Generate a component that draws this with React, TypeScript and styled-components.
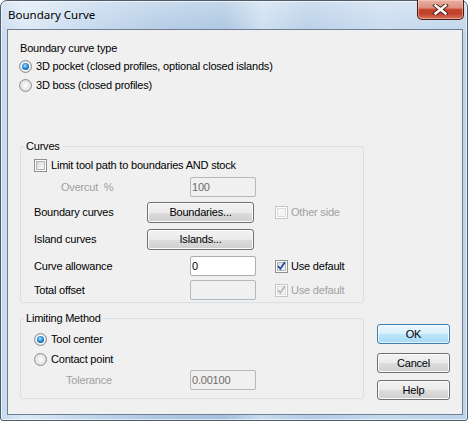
import React from 'react';
import styled, { createGlobalStyle } from 'styled-components';

const Global = createGlobalStyle`
  html, body { margin: 0; padding: 0; background: #ffffff; }
  body { width: 469px; height: 422px; overflow: hidden; }
`;

const Window = styled.div`
  box-sizing: border-box;
  width: 468px;
  height: 421px;
  border: 1px solid #4f5c6b;
  border-radius: 7px 7px 3px 3px;
  background:
    linear-gradient(180deg, rgba(255,255,255,0.35) 0%, rgba(255,255,255,0) 40px),
    linear-gradient(90deg, #c5d9ee 0%, #dbe8f5 5%, #c2d7ed 18%, #afc9e4 33%, #a6c2df 48%, #c9dcef 56%, #b4cce6 66%, #c5d9ee 82%, #bdd3ea 100%);
  box-shadow: inset 0 0 0 1px rgba(255, 255, 255, 0.6);
  display: flex;
  flex-direction: column;
  padding: 0 4px 5px 6px;
`;

const TitleBar = styled.div`
  height: 28px;
  display: flex;
  align-items: flex-start;
  flex: none;
`;

const TitleText = styled.span`
  margin: 6px 0 0 1px;
  font: 11.5px/16px "Noto Sans", "Liberation Sans", sans-serif;
  color: #000;
`;

const CloseButton = styled.div`
  box-sizing: border-box;
  margin: -1px -1px 0 auto;
  width: 47px;
  height: 20px;
  border: 1px solid #4a1c16;
  border-top: none;
  border-radius: 0 0 5px 5px;
  background: linear-gradient(180deg, #eab1a4 0%, #dc8f7e 42%, #c6452f 50%, #c1412b 72%, #d7745b 100%);
  box-shadow: inset 0 0 0 1px rgba(255, 220, 210, 0.45);
  display: flex;
  align-items: center;
  justify-content: center;
`;

const Client = styled.div`
  flex: 1;
  border: 1px solid #6e7f94;
  background: #f0f0f0;
  padding: 12px 0 0 12px;
  display: flex;
  flex-direction: column;
  color: #000;
  font: 11px/13px "Liberation Sans", Arial, sans-serif;
  letter-spacing: -0.2px;
`;

const Heading = styled.div`
  height: 13px;
`;

const OptionRow = styled.div<{ $mt: number; $indent?: number }>`
  display: flex;
  align-items: center;
  gap: 4px;
  height: 13px;
  margin-top: ${(p) => p.$mt}px;
  margin-left: ${(p) => p.$indent ?? 0}px;
`;

const Radio = styled.span<{ $on?: boolean }>`
  box-sizing: border-box;
  flex: none;
  width: 13px;
  height: 13px;
  border-radius: 50%;
  border: 1px solid #8d8f91;
  background: radial-gradient(circle at 50% 50%, #ffffff 0%, #e6e6e6 55%, #c9cacb 100%);
  display: flex;
  align-items: center;
  justify-content: center;
  &::after {
    content: '';
    display: ${(p) => (p.$on ? 'block' : 'none')};
    width: 7px;
    height: 7px;
    border-radius: 50%;
    background: radial-gradient(circle at 45% 40%, #b8e6ff 0%, #3aa3e8 35%, #0d5ea6 75%, #0a3f78 100%);
    box-shadow: 0 0 0 1px #ffffff;
  }
`;

const Box = styled.span<{ $disabled?: boolean }>`
  box-sizing: border-box;
  flex: none;
  width: 13px;
  height: 13px;
  border: 1px solid ${(p) => (p.$disabled ? '#c4c6c8' : '#8e8f8f')};
  background: #ffffff;
  padding: 1px;
  display: flex;
`;

const BoxInner = styled.span<{ $disabled?: boolean }>`
  flex: 1;
  border: 1px solid ${(p) => (p.$disabled ? '#dcdcdc' : '#b0b3b8')};
  background: ${(p) =>
    p.$disabled ? '#f5f5f5' : 'linear-gradient(135deg, #d6d8db 0%, #eceeef 60%, #f8f8f8 100%)'};
  position: relative;
  overflow: visible;
`;

const CheckMark = styled.svg`
  position: absolute;
  left: -1px;
  top: -2px;
`;

const Disabled = styled.span`
  color: #a0a0a0;
`;

const GroupBox = styled.fieldset<{ $mt: number }>`
  box-sizing: border-box;
  width: 344px;
  margin: ${(p) => p.$mt}px 0 0 0;
  padding: 0;
  min-width: 0;
  border: 1px solid #d5dfe5;
  border-radius: 3px;
  flex: none;
`;

const Legend = styled.legend`
  padding: 0 2px;
  margin-left: 3px;
  line-height: 13px;
  height: 13px;
`;

const GroupBody = styled.div<{ $pt: number; $pb: number }>`
  padding: ${(p) => p.$pt}px 0 ${(p) => p.$pb}px 13px;
`;

const Row = styled.div<{ $h: number; $mt?: number }>`
  display: grid;
  grid-template-columns: 113px 109px 1fr;
  align-items: center;
  height: ${(p) => p.$h}px;
  margin-top: ${(p) => p.$mt ?? 0}px;
`;

const RowLabel = styled.span<{ $indent?: number; $disabled?: boolean }>`
  padding-left: ${(p) => p.$indent ?? 0}px;
  color: ${(p) => (p.$disabled ? '#a0a0a0' : '#000')};
  white-space: nowrap;
`;

const SideCell = styled.div`
  display: flex;
  align-items: center;
  gap: 3px;
  padding-left: 19px;
  white-space: nowrap;
`;

const Field = styled.input`
  box-sizing: border-box;
  justify-self: end;
  width: 66px;
  height: 20px;
  margin: 0;
  padding: 0 1px;
  border: 1px solid #abadb3;
  border-radius: 2px;
  background: #ffffff;
  color: #000;
  font: 11px/13px "Liberation Sans", Arial, sans-serif;
  letter-spacing: -0.2px;
  outline: none;
  &:disabled {
    background: #f0f0f0;
    border-color: #b5b8bc;
    color: #6d6d6d;
  }
`;

const PushButton = styled.button<{ $default?: boolean; $mt?: number; $w?: number }>`
  box-sizing: border-box;
  width: ${(p) => p.$w ?? 73}px;
  height: ${(p) => (p.$w ? 21 : 20)}px;
  margin: ${(p) => p.$mt ?? 0}px 0 0 0;
  padding: 0;
  border: 1px solid ${(p) => (p.$default ? '#3c7fb1' : '#707070')};
  border-radius: 3px;
  background: ${(p) =>
    p.$default
      ? 'linear-gradient(180deg, #eaf6fd 0%, #d9f0fc 50%, #bee6fd 50%, #a7d9f5 100%)'
      : 'linear-gradient(180deg, #f2f2f2 0%, #ebebeb 50%, #dddddd 50%, #cfcfcf 100%)'};
  box-shadow: inset 0 0 0 1px ${(p) => (p.$default ? 'rgba(255,255,255,0.7)' : '#fcfcfc')};
  color: #000;
  font: 11px/13px "Liberation Sans", Arial, sans-serif;
  letter-spacing: -0.2px;
  text-align: center;
`;

const BottomRow = styled.div`
  display: flex;
  align-items: flex-start;
  margin-top: 9px;
`;

const ButtonColumn = styled.div`
  display: flex;
  flex-direction: column;
  margin: 12px 0 0 13px;
`;

const Checkbox: React.FC<{ checked?: boolean; disabled?: boolean }> = ({ checked, disabled }) => (
  <Box $disabled={disabled}>
    <BoxInner $disabled={disabled}>
      {checked && (
        <CheckMark width="9" height="10" viewBox="0 0 9 10">
          <path
            d="M1 5.2 L3.4 7.8 L8 1"
            fill="none"
            stroke={disabled ? '#b8b8b8' : '#2a4fa5'}
            strokeWidth="1.8"
          />
        </CheckMark>
      )}
    </BoxInner>
  </Box>
);

export default function App() {
  return (
    <>
      <Global />
      <Window>
        <TitleBar>
          <TitleText>Boundary Curve</TitleText>
          <CloseButton>
            <svg width="17" height="11" viewBox="0 0 17 11">
              <path d="M3.5 1.5 L13.5 9.5 M13.5 1.5 L3.5 9.5" stroke="#55231b" strokeWidth="4.4" strokeLinecap="square" fill="none" />
              <path d="M3.5 1.5 L13.5 9.5 M13.5 1.5 L3.5 9.5" stroke="#ffffff" strokeWidth="2.4" strokeLinecap="square" fill="none" />
            </svg>
          </CloseButton>
        </TitleBar>
        <Client>
          <Heading>Boundary curve type</Heading>
          <OptionRow $mt={5} $indent={-1}>
            <Radio $on />
            <span>3D pocket (closed profiles, optional closed islands)</span>
          </OptionRow>
          <OptionRow $mt={6} $indent={-1}>
            <Radio />
            <span>3D boss (closed profiles)</span>
          </OptionRow>

          <GroupBox $mt={48}>
            <Legend>Curves</Legend>
            <GroupBody $pt={6} $pb={2}>
              <OptionRow $mt={0}>
                <Checkbox />
                <span>Limit tool path to boundaries AND stock</span>
              </OptionRow>
              <Row $h={20} $mt={5}>
                <RowLabel $indent={27} $disabled>Overcut&nbsp;&nbsp;%</RowLabel>
                <Field disabled defaultValue="100" />
              </Row>
              <Row $h={21} $mt={5}>
                <RowLabel>Boundary curves</RowLabel>
                <PushButton $w={107}>Boundaries...</PushButton>
                <SideCell>
                  <Checkbox disabled />
                  <Disabled>Other side</Disabled>
                </SideCell>
              </Row>
              <Row $h={21} $mt={6}>
                <RowLabel>Island curves</RowLabel>
                <PushButton $w={107}>Islands...</PushButton>
              </Row>
              <Row $h={20} $mt={6}>
                <RowLabel>Curve allowance</RowLabel>
                <Field defaultValue="0" />
                <SideCell>
                  <Checkbox checked />
                  <span>Use default</span>
                </SideCell>
              </Row>
              <Row $h={20} $mt={4}>
                <RowLabel>Total offset</RowLabel>
                <Field disabled defaultValue="" />
                <SideCell>
                  <Checkbox checked disabled />
                  <Disabled>Use default</Disabled>
                </SideCell>
              </Row>
            </GroupBody>
          </GroupBox>

          <BottomRow>
            <GroupBox $mt={0}>
              <Legend>Limiting Method</Legend>
              <GroupBody $pt={8} $pb={8}>
                <OptionRow $mt={0}>
                  <Radio $on />
                  <span>Tool center</span>
                </OptionRow>
                <OptionRow $mt={7}>
                  <Radio />
                  <span>Contact point</span>
                </OptionRow>
                <Row $h={20} $mt={4}>
                  <RowLabel $indent={32} $disabled>Tolerance</RowLabel>
                  <Field disabled defaultValue="0.00100" />
                </Row>
              </GroupBody>
            </GroupBox>
            <ButtonColumn>
              <PushButton $default>OK</PushButton>
              <PushButton $mt={9}>Cancel</PushButton>
              <PushButton $mt={7}>Help</PushButton>
            </ButtonColumn>
          </BottomRow>
        </Client>
      </Window>
    </>
  );
}
